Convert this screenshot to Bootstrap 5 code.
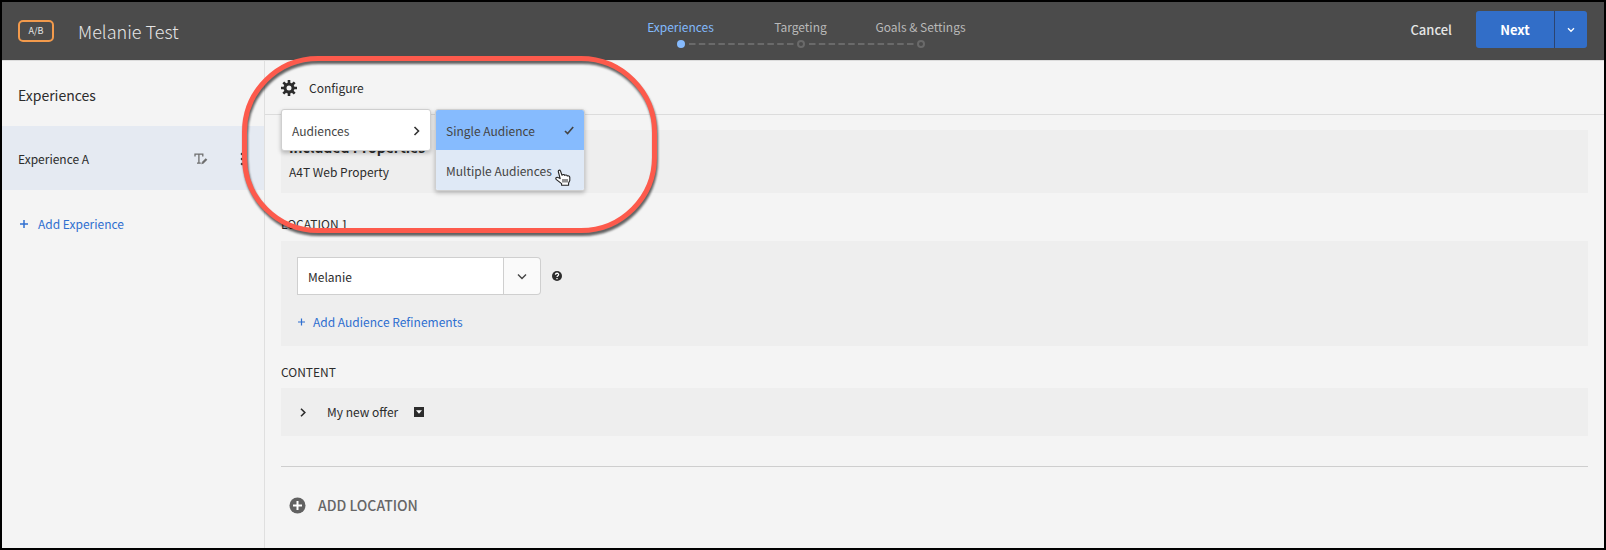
<!DOCTYPE html>
<html lang="en">
<head>
<meta charset="utf-8">
<meta name="viewport" content="width=device-width, initial-scale=1">
<title>Melanie Test</title>
<link href="https://cdn.jsdelivr.net/npm/bootstrap@5.3.0/dist/css/bootstrap.min.css" rel="stylesheet">
<style>
  body { font-family: "Noto Sans CJK SC", "Open Sans", sans-serif; font-size: 12px; line-height: 20px; color: #2c2c2c; background: #f4f4f4; }
  button, input { font: inherit; color: inherit; }
  .app-frame { border: 2px solid #000; }
  .topbar { display: grid; grid-template-columns: 1fr auto 1fr; align-items: center; height: 59px; padding: 0 17px 0 16px; background: #4b4b4b; color: #e6e6e6; border-bottom: 1px solid #dcdcdc; }
  .ab-tag { width: 36px; height: 22px; border: 2px solid #f29a4c; border-radius: 5px; font-size: 9px; line-height: 18px; text-align: center; }
  .activity-name { font-size: 18px; line-height: 24px; font-weight: 300; }
  .steps { grid-template-columns: repeat(3, 120px); row-gap: 1px; padding: 5px 4px 0 0; }
  .steps a { color: #b9b9b9; text-decoration: none; text-align: center; white-space: nowrap; }
  .steps a.current { color: #82b9fc; }
  .steps svg { grid-column: 1 / -1; }
  .plain-btn { background: none; border: 0; padding: 0; }
  .top-actions { font-size: 13px; font-weight: 500; padding-bottom: 3px; }
  .btn-next { height: 37px; background: #326ec8; color: #fff; border: 0; border-radius: 3px 0 0 3px; width: 78px; font-size: 13px; font-weight: 700; }
  .btn-more { height: 37px; background: #326ec8; color: #fff; border: 0; border-left: 1px solid #2c4470; border-radius: 0 3px 3px 0; width: 33px; padding: 0; }
  .side { width: 263px; border-right: 1px solid #dfdfdf; }
  .side h1 { font-size: 14px; line-height: 20px; font-weight: 400; margin: 0; padding: 24px 16px 21px; }
  .exp-row { height: 64px; background: #e5eaf2; padding: 1px 20px 0 16px; }
  .accent { color: #2f6fd0; text-decoration: none; }
  .config-bar { height: 54px; border-bottom: 1px solid #dcdcdc; padding: 1px 16px 0; }
  .config-menu { top: 48px; left: 16px; z-index: 3; }
  .menu-box { width: 150px; background: #fff; border: 1px solid #cfcfcf; border-radius: 3px; box-shadow: 0 2px 4px rgba(0,0,0,.25); overflow: hidden; }
  .menu-box button { height: 40px; width: 100%; padding: 1px 10px 0; color: #444; }
  .menu-box .chosen { background: #86bbfe; }
  .menu-box .hovered { background: #dfe9f6; }
  .pane { background: #eee; }
  .work { padding: 15px 16px; }
  .prop-pane { height: 63px; padding: 7px 8px; }
  .prop-pane h2 { font-size: 14px; line-height: 20px; font-weight: 700; margin: 0 0 5px; }
  .caption { font-size: 12px; line-height: 20px; font-weight: 400; margin: 0; padding: 21px 0 7px; }
  .caption.tight { padding: 16px 0 6px; }
  .loc-pane { padding: 16px 16px 14px; }
  .refine { margin-top: 17px; }
  .offer-pane { padding: 14px 18px; }
  .box-name { width: 207px; height: 38px; border: 1px solid #cfcfcf; background: #fff; padding: 0 10px; border-radius: 0; }
  .box-open { width: 37px; height: 38px; border: 1px solid #cfcfcf; border-left: 0; background: #fafafa; border-radius: 0 4px 4px 0; padding: 0; }
  .rule { height: 1px; background: #cecece; margin: 30px 0 28px; }
  .add-loc { font-size: 14px; font-weight: 500; color: #666; }
  .callout { top: 54px; left: 240px; width: 415px; height: 177px; z-index: 5; border: 5px solid #fd5a4c; border-radius: 76px; pointer-events: none; filter: drop-shadow(1px 3px 1px rgba(0,0,0,.6)); }
  .pointer { right: 14px; top: 60px; z-index: 4; }
  svg { display: block; flex: none; }
</style>
</head>
<body>
<div class="app-frame min-vh-100 d-flex flex-column position-relative">
  <header class="topbar">
    <div class="d-flex align-items-center gap-4">
      <span class="ab-tag">A/B</span>
      <span class="activity-name">Melanie Test</span>
    </div>
    <nav class="steps d-grid" aria-label="Steps">
      <a href="#" class="current">Experiences</a>
      <a href="#">Targeting</a>
      <a href="#">Goals &amp; Settings</a>
      <svg width="360" height="12" viewBox="0 0 360 12" fill="none" stroke="#6a6a6a" stroke-width="2">
        <path d="M68 6H173M188 6H293" stroke-dasharray="6.5 3.3"/>
        <circle cx="60" cy="6" r="4" fill="#86bbfe" stroke="none"/>
        <circle cx="180" cy="6" r="3"/><circle cx="300" cy="6" r="3"/>
      </svg>
    </nav>
    <div class="top-actions d-flex align-items-center justify-content-end">
      <button class="plain-btn me-4">Cancel</button>
      <button class="btn-next">Next</button>
      <button class="btn-more d-flex align-items-center justify-content-center" aria-label="More options">
        <svg width="8" height="6" viewBox="0 0 8 6" fill="none" stroke="#fff" stroke-width="1.3"><path d="M1 1.3 4 4.3 7 1.3"/></svg>
      </button>
    </div>
  </header>

  <div class="d-flex flex-grow-1">
    <aside class="side flex-shrink-0">
      <h1>Experiences</h1>
      <div class="exp-row d-flex align-items-center">
        <span class="flex-grow-1">Experience A</span>
        <button class="plain-btn me-4" aria-label="Rename">
          <svg width="14" height="12" viewBox="0 0 14 12" fill="none" stroke="#6e6e6e"><path d="M1 3.5V1.2H8.8V3.5M4.9 1V10M3 10.2H6.8" stroke-width="1.3"/><path d="M8.500 10 12.500 6" stroke-width="2.3"/><path d="M7.300 11.300 7.800 9.300 9.400 10.800Z" fill="#6e6e6e" stroke="none"/></svg>
        </button>
        <button class="plain-btn ps-2" aria-label="More">
          <svg width="4" height="14" viewBox="0 0 4 14" fill="#444"><circle cx="2" cy="2" r="1.3"/><circle cx="2" cy="7" r="1.3"/><circle cx="2" cy="12" r="1.3"/></svg>
        </button>
      </div>
      <a href="#" class="accent d-flex align-items-center px-3 py-4 gap-2">
        <svg width="12" height="10" viewBox="0 0 12 10" fill="none" stroke="#2f6fd0" stroke-width="1.5"><path d="M2 5H10M6 1V9"/></svg>
        Add Experience
      </a>
    </aside>

    <main class="flex-grow-1 position-relative">
      <div class="config-bar d-flex align-items-center">
        <button class="plain-btn d-flex align-items-center">
          <svg class="me-2" width="16" height="16" viewBox="0 0 16 16" fill="none" stroke="#2c2c2c"><circle cx="8" cy="8" r="4" stroke-width="3"/><path d="M8 0V3M8 13V16M0 8H3M13 8H16M2.3 2.3 4.5 4.5M11.5 11.5 13.7 13.7M2.3 13.7 4.5 11.5M11.5 4.5 13.7 2.3" stroke-width="2.6"/></svg>
          <span class="ms-1">Configure</span>
        </button>
      </div>

      <div class="config-menu position-absolute d-flex align-items-start gap-1">
        <div class="menu-box">
          <button class="plain-btn d-flex align-items-center justify-content-between">Audiences
            <svg width="7" height="10" viewBox="0 0 7 10" fill="none" stroke="#333" stroke-width="1.6"><path d="M1.5 1 5.5 5 1.5 9"/></svg>
          </button>
        </div>
        <div class="menu-box">
          <button class="plain-btn chosen d-flex align-items-center justify-content-between">Single Audience
            <svg width="10" height="9" viewBox="0 0 10 9" fill="none" stroke="#444" stroke-width="1.6"><path d="M1 5 3.6 7.6 9.2 1"/></svg>
          </button>
          <button class="plain-btn hovered d-flex align-items-center">Multiple Audiences</button>
        </div>
        <svg class="pointer position-absolute" width="16" height="17" viewBox="0 0 16 17"><path d="M5.200 9.600 3.400 3C2.900 1.100 4.900.4 5.600 2.200L7 6.200C7.600 5.200 9.300 5.300 9.700 6.400 10.500 5.600 12 6 12.300 7 13.300 6.400 14.700 7 14.800 8.400V11.500L13.600 14V16.200H6.600V14.600L1.400 10.600C0 9 1.600 7.800 3 8.600Z" fill="#fff" stroke="#222" stroke-width="1.1" stroke-linejoin="round"/><path d="M8 10V13.500M10 10V13.500M12 10V13.500" stroke="#222" stroke-width="1"/></svg>
      </div>

      <div class="work">
        <section class="pane prop-pane">
          <h2>Included Properties</h2>
          <div>A4T Web Property</div>
        </section>

        <h3 class="caption">LOCATION 1</h3>
        <section class="pane loc-pane">
          <div class="d-flex align-items-center">
            <input class="box-name" type="text" value="Melanie" aria-label="Location name">
            <button class="box-open d-flex align-items-center justify-content-center" aria-label="Show locations">
              <svg width="10" height="7" viewBox="0 0 10 7" fill="none" stroke="#444" stroke-width="1.4"><path d="M1 1.5 5 5.5 9 1.5"/></svg>
            </button>
            <svg class="ms-2" width="16" height="10" viewBox="0 0 16 10"><circle cx="8" cy="5" r="5" fill="#2c2c2c"/><path d="M6.4 3.7C6.5 1.7 9.8 1.8 9.6 3.7 9.5 4.7 8 4.7 8 6.1M8 7V8.3" fill="none" stroke="#fff" stroke-width="1.3"/></svg>
          </div>
          <div class="refine d-flex">
            <a href="#" class="accent d-flex align-items-center gap-2">
              <svg width="8" height="8" viewBox="0 0 8 8" fill="none" stroke="#2f6fd0" stroke-width="1.2"><path d="M1 4H8M4.500 .5V7.500"/></svg>
              Add Audience Refinements
            </a>
          </div>
        </section>

        <h3 class="caption tight">CONTENT</h3>
        <section class="pane offer-pane d-flex align-items-center">
          <button class="plain-btn d-flex align-items-center">
            <svg width="8" height="9" viewBox="0 0 8 9" fill="none" stroke="#2c2c2c" stroke-width="1.6"><path d="M2 .8 5.800 4.500 2 8.200"/></svg>
            <span class="ms-3 ps-1">My new offer</span>
          </button>
          <button class="plain-btn ms-3" aria-label="Offer options">
            <svg width="10" height="10" viewBox="0 0 10 10"><path d="M0 0H10V10H0Z" fill="#2c2c2c"/><path d="M2 3.300H8L5 6.800Z" fill="#fff"/></svg>
          </button>
        </section>

        <div class="rule"></div>
        <button class="plain-btn add-loc d-flex align-items-center gap-2 px-2">
          <svg width="17" height="17" viewBox="0 0 17 17"><circle cx="8.500" cy="8.500" r="8" fill="#616161"/><path d="M4 8.500H13M8.500 4V13" stroke="#fff" stroke-width="2"/></svg>
          <span class="ms-1">ADD LOCATION</span>
        </button>
      </div>
    </main>
  </div>
  <div class="callout position-absolute"></div>
</div>
<script src="https://cdn.jsdelivr.net/npm/bootstrap@5.3.0/dist/js/bootstrap.bundle.min.js"></script>
</body>
</html>
